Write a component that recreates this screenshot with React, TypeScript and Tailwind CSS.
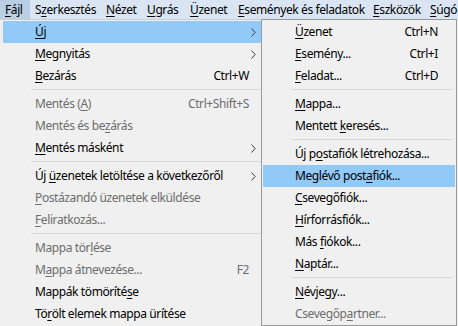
import React from 'react';

type Item =
  | { sep: true }
  | {
      sep?: false;
      label: string;
      u?: number;
      shortcut?: string;
      arrow?: boolean;
      disabled?: boolean;
      active?: boolean;
    };

const menuBar: { label: string; u: number; w: string; active?: boolean }[] = [
  { label: 'Fájl', u: 0, w: 'w-[30px]', active: true },
  { label: 'Szerkesztés', u: 1, w: 'w-[71px]' },
  { label: 'Nézet', u: 0, w: 'w-[41px]' },
  { label: 'Ugrás', u: 0, w: 'w-[43px]' },
  { label: 'Üzenet', u: 0, w: 'w-[48px]' },
  { label: 'Események és feladatok', u: 0, w: 'w-[135px]' },
  { label: 'Eszközök', u: 0, w: 'w-[57px]' },
  { label: 'Súgó', u: 0, w: 'w-[40px]' },
];

const fileMenu: Item[] = [
  { label: 'Új', u: 0, arrow: true, active: true },
  { label: 'Megnyitás', u: 0, arrow: true },
  { label: 'Bezárás', u: 0, shortcut: 'Ctrl+W' },
  { sep: true },
  { label: 'Mentés (A)', u: 8, shortcut: 'Ctrl+Shift+S', disabled: true },
  { label: 'Mentés és bezárás', u: 12, disabled: true },
  { label: 'Mentés másként', u: 0, arrow: true },
  { sep: true },
  { label: 'Új üzenetek letöltése a következőről', u: 3, arrow: true },
  { label: 'Postázandó üzenetek elküldése', u: 0, disabled: true },
  { label: 'Feliratkozás...', u: 0, disabled: true },
  { sep: true },
  { label: 'Mappa törlése', u: 9, disabled: true },
  { label: 'Mappa átnevezése...', u: 1, shortcut: 'F2', disabled: true },
  { label: 'Mappák tömörítése', u: 15 },
  { label: 'Törölt elemek mappa ürítése', u: 2 },
  { sep: true },
];

const newMenu: Item[] = [
  { label: 'Üzenet', u: 0, shortcut: 'Ctrl+N' },
  { label: 'Esemény...', u: 0, shortcut: 'Ctrl+I' },
  { label: 'Feladat...', u: 0, shortcut: 'Ctrl+D' },
  { sep: true },
  { label: 'Mappa...', u: 0 },
  { label: 'Mentett keresés...', u: 8 },
  { sep: true },
  { label: 'Új postafiók létrehozása...', u: 4 },
  { label: 'Meglévő postafiók...', u: 12, active: true },
  { label: 'Csevegőfiók...', u: 0 },
  { label: 'Hírforrásfiók...', u: 0 },
  { label: 'Más fiókok...', u: 4 },
  { label: 'Naptár...', u: 0 },
  { sep: true },
  { label: 'Névjegy...', u: 0 },
  { label: 'Csevegőpartner...', u: 8, disabled: true },
];

const Label = ({ text, u }: { text: string; u?: number }) => {
  if (u === undefined) return <>{text}</>;
  return (
    <>
      {text.slice(0, u)}
      <span className="underline decoration-1 underline-offset-[2px]">{text[u]}</span>
      {text.slice(u + 1)}
    </>
  );
};

const Chevron = () => (
  <svg width="5" height="9" viewBox="0 0 5 9" className="ml-[2px]">
    <path d="M0.5 0.5 L4.2 4.5 L0.5 8.5" fill="none" stroke="#3c3c3c" strokeWidth="1" />
  </svg>
);

const MenuRows = ({ items, gutter, right, arrowCol }: { items: Item[]; gutter: string; right: string; arrowCol: boolean }) => (
  <>
    {items.map((it, i) =>
      it.sep ? (
        <div key={i} className={`h-[6px] pt-[2px] ${gutter}`}>
          <div className="h-px bg-[#d7d7d7]" />
        </div>
      ) : (
        <div
          key={i}
          className={`h-[22px] flex items-center pl-[32px] ${it.active ? 'bg-[#91c9f7]' : ''} ${
            it.disabled ? 'text-[#6d6d6d]' : 'text-black'
          }`}
        >
          <span className="whitespace-nowrap">
            <Label text={it.label} u={it.u} />
          </span>
          <span className="flex-1" />
          {it.shortcut && <span className="whitespace-nowrap">{it.shortcut}</span>}
          {arrowCol ? (
            <span className={`${right} flex items-center`}>{it.arrow && <Chevron />}</span>
          ) : (
            <span className={right} />
          )}
        </div>
      )
    )}
  </>
);

export default function App() {
  return (
    <div
      className="w-[458px] h-[326px] overflow-hidden bg-[#f0f0f0] text-[12px] leading-none tracking-[-0.4px]"
      style={{ fontFamily: '"Noto Sans", "Open Sans", sans-serif' }}
    >
      <div className="h-[19px] flex bg-[#d9e5f2] whitespace-nowrap">
        {menuBar.map((m) => (
          <div
            key={m.label}
            className={`${m.w} shrink-0 h-full flex items-center pl-[5px] text-black ${m.active ? 'bg-[#bacfe3]' : ''}`}
          >
            <Label text={m.label} u={m.u} />
          </div>
        ))}
      </div>
      <div className="flex items-start">
        <div className="w-[261px] shrink-0 border-t border-[#cccccc] pt-px pl-[3px]">
          <MenuRows items={fileMenu} gutter="pl-[28px]" right="w-[12px]" arrowCol />
        </div>
        <div className="w-[196px] shrink-0 border border-[#999999] bg-[#f0f0f0] px-px pt-px">
          <MenuRows items={newMenu} gutter="pl-[28px] pr-[2px]" right="w-[17px]" arrowCol={false} />
        </div>
      </div>
    </div>
  );
}
